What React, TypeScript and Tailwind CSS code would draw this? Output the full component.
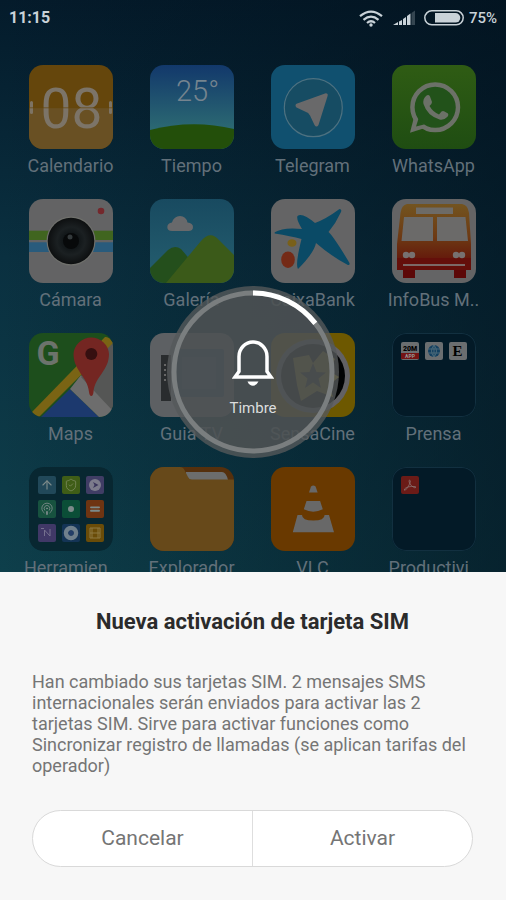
import type { ReactNode } from 'react'
import { ArrowUp, Equal, Podcast, ShieldCheck } from 'lucide-react'

interface AppItem {
  name: string
  icon: ReactNode
}

const Art = ({ children }: { children: ReactNode }) => (
  <svg viewBox="0 0 84 84" className="block size-full" aria-hidden="true">
    {children}
  </svg>
)

const CalendarIcon = () => (
  <Art>
    <rect width="84" height="84" fill="#65460c" />
    <rect y="43" width="84" height="41" fill="#695023" />
    <rect x="1" y="36" width="3" height="13" rx="1.5" fill="#7d7363" />
    <rect x="80" y="36" width="3" height="13" rx="1.5" fill="#7d7363" />
    <text x="42.500" y="63" textAnchor="middle" fontSize="55" fontWeight="400" fill="#7c7468">
      08
    </text>
    <rect y="42.500" width="84" height="0.700" fill="#65460c" />
  </Art>
)

const WeatherIcon = () => (
  <Art>
    <defs>
      <linearGradient id="weather-sky" x1="0" y1="0" x2="0" y2="1">
        <stop offset="0" stopColor="#12386b" />
        <stop offset="0.75" stopColor="#2b6872" />
      </linearGradient>
    </defs>
    <rect width="84" height="84" fill="url(#weather-sky)" />
    <path d="M0 65 Q42 54 84 64 V84 H0Z" fill="#234f0a" />
    <text x="26" y="36" fontSize="29" fontWeight="300" fill="#75848f">
      25°
    </text>
  </Art>
)

const TelegramIcon = () => (
  <Art>
    <rect width="84" height="84" fill="#10506f" />
    <circle cx="42.3" cy="42.7" r="29" fill="#164c63" stroke="#4d7180" strokeWidth="1.2" />
    <path
      d="M25.5 38.8 L54 28.4 Q57.5 28 56.6 31 L47.5 60 Q45.5 63 43.5 60 L39 50.5 Q37.5 47.5 34.5 46.8 L25.5 42.5 Q23.5 40.5 25.5 38.8Z"
      fill="#69696a"
    />
  </Art>
)

const WhatsAppIcon = () => (
  <Art>
    <defs>
      <linearGradient id="wa-green" x1="0" y1="0" x2="0" y2="1">
        <stop offset="0" stopColor="#2f5c14" />
        <stop offset="1" stopColor="#1f4d12" />
      </linearGradient>
    </defs>
    <rect width="84" height="84" fill="url(#wa-green)" />
    <path d="M18 67.7 L22 52 L27 57 L33 63Z" fill="#6c7168" />
    <circle cx="43.2" cy="42.3" r="22.8" fill="#22521a" stroke="#6c7168" strokeWidth="4.5" />
    <path d="M24 61.5 L26.5 53.5 L32 59.5Z" fill="#22521a" />
    <path
      d="M34 31 Q36.5 29 38 31.5 L40 37 Q40 39 37.5 41 Q41 47 47 49.5 L49.5 46.5 Q51 45.5 52.5 46.5 L56 48.5 Q57 50 55.5 51.7 Q52 55.5 47.5 54.5 Q35 50.5 31.5 39 Q30.5 34 34 31Z"
      fill="#6c7168"
    />
  </Art>
)

const CameraIcon = () => (
  <Art>
    <defs>
      <radialGradient id="lens">
        <stop offset="0" stopColor="#05080a" />
        <stop offset="0.25" stopColor="#0e1315" />
        <stop offset="0.6" stopColor="#1b2022" />
        <stop offset="1" stopColor="#0d0f10" />
      </radialGradient>
    </defs>
    <rect width="84" height="84" fill="#636364" />
    <rect y="31.7" width="84" height="9.3" fill="#40651f" />
    <rect y="43.3" width="84" height="9.7" fill="#295b7c" />
    <circle cx="42" cy="42" r="24.5" fill="#6f706c" />
    <circle cx="42" cy="42" r="23.3" fill="url(#lens)" />
    <circle cx="42" cy="42" r="8" fill="#07090a" />
    <circle cx="41" cy="38" r="2.5" fill="#343a3c" />
    <circle cx="72" cy="12" r="3.3" fill="#74282c" />
  </Art>
)

const GalleryIcon = () => (
  <Art>
    <defs>
      <linearGradient id="gallery-sky" x1="0" y1="0" x2="0" y2="1">
        <stop offset="0" stopColor="#184a60" />
        <stop offset="1" stopColor="#255f70" />
      </linearGradient>
    </defs>
    <rect width="84" height="84" fill="url(#gallery-sky)" />
    <path
      d="M22 32 Q17.3 32 17.3 28 Q17.5 24 22 23.5 Q24 17 30 17 Q36 17 37.5 23.5 Q43 24 43 28 Q43 32 38.5 32Z"
      fill="#68696b"
    />
    <path d="M0 69 L18 51 Q24.7 45.5 31 50 L60 84 H0Z" fill="#244f1c" />
    <path d="M16 84 L51 42 Q60.3 31 69 41 L84 56 V84Z" fill="#3b5a19" />
  </Art>
)

const CaixaBankIcon = () => (
  <Art>
    <rect width="84" height="84" fill="#646465" />
    <path
      d="M3.7 33.3 Q12 28 31 30 Q25 20 26.5 17 Q31 13 44 24 Q55 20 68.5 10 Q71 10 70 13 Q65 24 57.5 33 Q63 38 78.5 64 Q79 67 76 65.5 Q60 57 45 44 Q43 54 27 70 Q24 66 30.5 40 Q20 37 3.7 34.5Z"
      fill="#0a4a66"
    />
    <ellipse cx="21" cy="44" rx="4.5" ry="3.8" fill="#79601a" />
    <ellipse cx="17" cy="60.7" rx="6.8" ry="8.3" fill="#742a16" />
  </Art>
)

const BusIcon = () => (
  <Art>
    <defs>
      <linearGradient id="bus-body" x1="0" y1="0" x2="0" y2="1">
        <stop offset="0" stopColor="#73541f" />
        <stop offset="0.5" stopColor="#6d3a14" />
        <stop offset="0.8" stopColor="#661d0c" />
        <stop offset="1" stopColor="#5c0d08" />
      </linearGradient>
    </defs>
    <rect width="84" height="84" fill="#646465" />
    <path d="M15 5 H70 Q76 6 77 14 L79 45 V71 H5 V45 L8.5 14 Q9.5 6 15 5Z" fill="url(#bus-body)" />
    <path d="M11 71H23V79H11Z M62 71H74V79H62Z" fill="#5c0808" />
    <rect x="24" y="8.5" width="37" height="6.5" fill="#6d6b67" />
    <path d="M12 18 H41 V42 H9.5Z M45 18 H73.5 L76 42 H45Z" fill="#6b6a69" />
    <path d="M5 59 H79 V71 H5Z" fill="#640f0a" />
    <rect x="11" y="65" width="62" height="2" fill="#7b6966" />
    {[14, 20, 64, 70].map((cx) => (
      <circle key={cx} cx={cx} cy="56" r="3.2" fill="#777170" />
    ))}
  </Art>
)

const MapsIcon = () => (
  <Art>
    <rect width="84" height="84" fill="#1d4e1c" />
    <path d="M52 40 L84 8 V84 H75Z" fill="#555655" />
    <path d="M41 56 L12 84 H70Z" fill="#1c396e" />
    <path d="M41 56 L52 42 L84 77 V84 H70Z" fill="#6d6d6d" />
    <path d="M2 80 L76 4 Q80 3 84 10 L10 84 H4Z" fill="#7a6414" />
    <path d="M52 44 L84 12 V78Z" fill="#555655" />
    <path
      d="M62.3 63 Q60.5 63 60 59 C58.5 43 44.5 38 44.5 21 A17.8 17.8 0 0 1 80 21 C80 38 66 43 64.5 59 Q64 63 62.3 63Z"
      fill="#742622"
    />
    <circle cx="62.3" cy="21" r="6" fill="#360f10" />
    <text x="19" y="32" textAnchor="middle" fontSize="34" fontWeight="700" fill="#6c736c">
      G
    </text>
  </Art>
)

const TvGuideIcon = () => (
  <Art>
    <rect width="84" height="84" fill="#5d6063" />
    <rect x="11" y="22" width="10" height="46" fill="#292c2e" />
    <path d="M15 31v20" stroke="#666" strokeWidth="2" strokeDasharray="2 3" />
    <rect x="24" y="16" width="50" height="48" rx="2" fill="#2c4358" />
    <rect x="32" y="24" width="34" height="32" fill="#3a5064" />
  </Art>
)

const SensaCineIcon = () => (
  <Art>
    <rect width="84" height="84" fill="#6d5800" />
    <circle cx="42" cy="43" r="37" fill="#626164" />
    <circle cx="42" cy="43" r="32" fill="#020304" />
    <path
      d="M22 25 L38 22 L42 30 L52 18 L64 26 L58 38 L68 44 L58 52 L62 64 L46 58 L30 68 L26 52Z"
      fill="#7a6810"
    />
    <path
      d="M42 30 L45.5 39 L55 39.5 L47.5 45.5 L50 55 L42 49.5 L34 55 L36.5 45.5 L29 39.5 L38.5 39Z"
      fill="#20211a"
    />
  </Art>
)

const ExplorerIcon = () => (
  <Art>
    <rect width="84" height="84" fill="#55300d" />
    <path d="M36 5 H72 Q76 5 78 13 H36Z" fill="#6c6d6d" />
    <path d="M0 0 H30 Q33 0 34.5 3 L38 10 Q39 12.5 42 12.5 H84 V84 H0Z" fill="#67491a" />
  </Art>
)

const VlcIcon = () => (
  <Art>
    <rect width="84" height="84" fill="#693900" />
    <path d="M38 25.6 L40 19.5 Q42.3 17.5 44.6 19.5 L46.6 25.6Z" fill="#686868" />
    <path d="M35.5 34 H49.1 L51.8 42.3 Q42.3 47 32.8 42.3Z" fill="#686868" />
    <path
      d="M26.5 48 H31 Q31 53.5 42.3 53.5 Q53.6 53.5 53.6 48 H58 L63 65.3 H21.8Z"
      fill="#686868"
    />
  </Art>
)

/* Small app tile inside a folder */
const Tile = ({ className, children }: { className: string; children: ReactNode }) => (
  <span
    className={`flex aspect-square flex-col items-center justify-center overflow-hidden rounded-xs ${className}`}
  >
    {children}
  </span>
)

const TileArt = ({ children }: { children: ReactNode }) => (
  <svg viewBox="0 0 18 18" className="size-full" aria-hidden="true">
    {children}
  </svg>
)

/* Rounded dark tray with up to nine tiles */
const Folder = ({ children }: { children?: ReactNode }) => (
  <span className="grid size-full grid-cols-3 content-start gap-1.5 rounded-[14px] bg-[#031a27] p-[9px] ring-1 ring-[#123040] ring-inset">
    {children}
  </span>
)

const NewsFolder = () => (
  <Folder>
    <Tile className="bg-[#6b6e70]">
      <TileArt>
        <text x="9" y="9" textAnchor="middle" fontSize="7" fontWeight="900">
          20M
        </text>
        <rect y="11" width="18" height="6" fill="#741414" />
        <text x="9" y="16" textAnchor="middle" fontSize="5" fontWeight="700" fill="#999">
          APP
        </text>
      </TileArt>
    </Tile>
    <Tile className="bg-[#6b6e70]">
      <TileArt>
        <circle cx="9" cy="9" r="6" fill="#123f60" />
        <path
          d="M3 7H15M3 11H15M9 3V15M9 3Q4 9 9 15M9 3Q14 9 9 15"
          fill="none"
          stroke="#56727f"
          strokeWidth="0.8"
        />
      </TileArt>
    </Tile>
    <Tile className="bg-[#6b6e70] text-black">
      <span className="font-['Liberation_Serif',serif] text-[15px] leading-none font-bold">E</span>
    </Tile>
  </Folder>
)

const ToolsFolder = () => (
  <span className="grid size-full grid-cols-3 content-start gap-1.5 rounded-[14px] bg-[#082731] p-[9px] text-[#7c8a8a]">
    <Tile className="bg-[#214859]">
      <ArrowUp className="size-3.5" />
    </Tile>
    <Tile className="bg-[#3f5d17] text-[#78885a]">
      <ShieldCheck className="size-3.5" strokeWidth={1.5} />
    </Tile>
    <Tile className="bg-[#403d65]">
      <TileArt>
        <circle cx="9" cy="9" r="6" fill="#7c7c8c" />
        <path d="M7 6 L12.5 9 L7 12 L8.5 9Z" fill="#3a365c" />
      </TileArt>
    </Tile>
    <Tile className="bg-[#17523f]">
      <Podcast className="size-3.5" strokeWidth={1.5} />
    </Tile>
    <Tile className="bg-[#0b4e37]">
      <span className="size-1.5 rounded-full bg-[#7c8a8a]" />
    </Tile>
    <Tile className="bg-[#6e3412]">
      <Equal className="size-3.5" strokeWidth={3} />
    </Tile>
    <Tile className="bg-[#403867]">
      <TileArt>
        <path d="M3 4.5H6M6.5 12V6L12 12V5" fill="none" stroke="#75708f" strokeWidth="1" />
      </TileArt>
    </Tile>
    <Tile className="bg-[#143456]">
      <TileArt>
        <circle cx="9" cy="9" r="5" fill="none" stroke="#70808c" strokeWidth="4.5" />
        <circle cx="9" cy="9" r="2.5" fill="#243e68" />
      </TileArt>
    </Tile>
    <Tile className="bg-[#6a4c08]">
      <TileArt>
        <path d="M4 4H14V14H4Z M4 9H14M6 4V14M12 4V14" fill="none" stroke="#8d7840" strokeWidth="1" />
      </TileArt>
    </Tile>
  </span>
)

const ProductivityFolder = () => (
  <Folder>
    <Tile className="bg-[#6b1b17]">
      <TileArt>
        <path
          d="M8.5 4 Q10 4 9 7 Q7 12 4.5 14 Q3 15 3.5 13 Q6 10 14 10.5 Q16 11 14 12 Q10 10.5 8.5 7 Q7.5 4.5 8.5 4Z"
          fill="none"
          stroke="#8e7a78"
          strokeWidth="0.7"
        />
      </TileArt>
    </Tile>
  </Folder>
)

const apps: AppItem[] = [
  { name: 'Calendario', icon: <CalendarIcon /> },
  { name: 'Tiempo', icon: <WeatherIcon /> },
  { name: 'Telegram', icon: <TelegramIcon /> },
  { name: 'WhatsApp', icon: <WhatsAppIcon /> },
  { name: 'Cámara', icon: <CameraIcon /> },
  { name: 'Galería', icon: <GalleryIcon /> },
  { name: 'CaixaBank', icon: <CaixaBankIcon /> },
  { name: 'InfoBus M..', icon: <BusIcon /> },
  { name: 'Maps', icon: <MapsIcon /> },
  { name: 'Guia TV', icon: <TvGuideIcon /> },
  { name: 'SensaCine', icon: <SensaCineIcon /> },
  { name: 'Prensa', icon: <NewsFolder /> },
  { name: 'Herramien..', icon: <ToolsFolder /> },
  { name: 'Explorador', icon: <ExplorerIcon /> },
  { name: 'VLC', icon: <VlcIcon /> },
  { name: 'Productivi..', icon: <ProductivityFolder /> },
]

const StatusBar = () => (
  <header className="flex h-9 items-center justify-between px-[9px] text-[#c9d2d8]">
    <span className="text-base font-bold">11:15</span>
    <div className="flex items-center font-medium">
      <svg
        viewBox="0 0 24 17"
        className="mr-2.5 h-[17px] w-6"
        fill="none"
        stroke="currentColor"
        strokeWidth="2.2"
        aria-label="Wi-Fi"
      >
        <path d="M1 6.2 Q12 -3 23 6.2" />
        <path d="M4.5 9.8 Q12 3.5 19.5 9.8" />
        <path d="M8 13 Q12 9.5 16 13" />
        <circle cx="12" cy="15" r="1.7" fill="currentColor" stroke="none" />
      </svg>
      <svg viewBox="0 0 23 16" className="mr-2 h-4 w-[23px]" fill="currentColor" aria-label="Señal">
        <path d="M0 15 L5 12 V15Z M6 11.5 L9 10 V15 H6Z M10 9 L13 7 V15 H10Z M14 6 L17.5 3.5 V15 H14Z" />
        <path d="M18.5 3 L22 0.5 V15 H18.5Z" opacity="0.25" />
      </svg>
      <svg viewBox="0 0 40 16" className="mr-[5px] h-4 w-10" aria-label="Batería">
        <rect
          x="0.8"
          y="0.8"
          width="38.4"
          height="14"
          rx="7"
          fill="none"
          stroke="currentColor"
          strokeWidth="1.5"
        />
        <path d="M11 3 H31.5 A4.8 4.8 0 0 1 31.5 12.6 H11Z" fill="currentColor" />
      </svg>
      <span className="text-[15px]">75%</span>
    </div>
  </header>
)

/* Ringer toast shown over the launcher while the volume mode changes */
const RingerDial = () => (
  <div className="pointer-events-none absolute inset-x-0 top-[286px] flex justify-center">
    <div className="relative flex size-[172px] flex-col items-center">
      <svg viewBox="0 0 172 172" className="absolute inset-0 size-full" fill="none" aria-hidden="true">
        <circle cx="86" cy="86" r="86" fill="#55595a" fillOpacity="0.8" />
        <circle
          cx="86"
          cy="86"
          r="79"
          fill="#484c4d"
          fillOpacity="0.45"
          stroke="#7a7e7f"
          strokeWidth="5"
        />
        <path d="M86 7 A79 79 0 0 1 148.300 37.400" stroke="#fff" strokeWidth="5" />
      </svg>
      <svg
        viewBox="0 0 42 46"
        className="relative mt-[54px] h-[46px] w-[42px]"
        fill="none"
        stroke="#fff"
        strokeWidth="3.5"
        aria-hidden="true"
      >
        <path d="M3 37 L7 31.500 V16.500 A14 14.500 0 0 1 35 16.500 V31.500 L39 37Z" />
        <path d="M15.500 41.500 H26.500 Q24.500 45.800 21 45.800 Q17.500 45.800 15.500 41.500Z" fill="#fff" stroke="none" />
      </svg>
      <span className="relative mt-2.5 text-[15px] leading-6 text-[#dcdddd]">Timbre</span>
    </div>
  </div>
)

const HomeScreen = () => (
  <section className="relative min-h-0 flex-1 overflow-hidden bg-[linear-gradient(to_right,transparent,#02101b99),linear-gradient(to_bottom,#041b2b,#0a3040_45%,#0e3f4b)]">
    <StatusBar />
    <div className="grid grid-cols-4 gap-y-[21px] pt-[29px] pr-3 pl-2.5">
      {apps.map(({ name, icon }) => (
        <button key={name} type="button" className="flex flex-col items-center gap-[5px]">
          <span className="size-[84px] overflow-hidden rounded-[14px]">{icon}</span>
          <span className="text-lg leading-6 whitespace-nowrap text-[#62707a]">{name}</span>
        </button>
      ))}
    </div>
    <RingerDial />
  </section>
)

const SimDialog = () => (
  <section
    role="dialog"
    aria-labelledby="sim-title"
    className="shrink-0 bg-[#f7f7f7] pt-9 pr-[33px] pb-[33px] pl-8 text-[#757575]"
  >
    <h1 id="sim-title" className="text-center text-[22px] leading-7 font-bold text-[#2b2b2b]">
      Nueva activación de tarjeta SIM
    </h1>
    <p className="mt-[35px] text-lg leading-[21px]">
      Han cambiado sus tarjetas SIM. 2 mensajes SMS internacionales serán enviados para activar las 2
      tarjetas SIM. Sirve para activar funciones como Sincronizar registro de llamadas (se aplican
      tarifas del operador)
    </p>
    <div className="mt-[34px] flex h-[57px] divide-x divide-[#dedede] overflow-hidden rounded-full border border-[#d9d9d9] bg-white text-[21px]">
      <button type="button" className="flex-1">
        Cancelar
      </button>
      <button type="button" className="flex-1">
        Activar
      </button>
    </div>
  </section>
)

export default function App() {
  return (
    <main className="flex h-screen flex-col font-[Roboto,sans-serif]">
      <HomeScreen />
      <SimDialog />
    </main>
  )
}
